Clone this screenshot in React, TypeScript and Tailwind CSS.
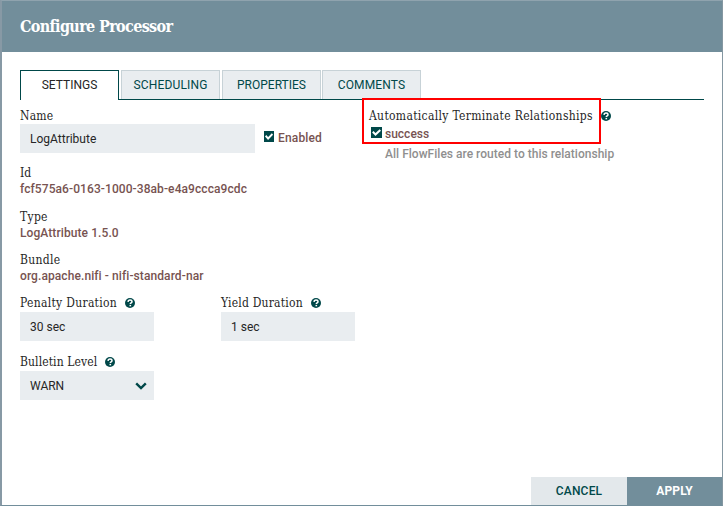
import React from 'react';

const slab = "font-['DejaVu_Serif_Condensed','DejaVu_Serif',serif] [font-stretch:condensed] text-[#262626] whitespace-nowrap";

function Help() {
  return (
    <svg className="block shrink-0" width="10" height="10" viewBox="0 0 10 10">
      <circle cx="5" cy="5" r="5" fill="#004849" />
      <path d="M3 3.900C3.100 2.600 3.900 2 5 2c1.200 0 2 .7 2 1.700 0 1.200-1.700 1.200-1.700 2.400" fill="none" stroke="#fff" strokeWidth="1.500" />
      <rect x="4.500" y="6.900" width="1.600" height="1.400" fill="#fff" />
    </svg>
  );
}

function Check({ className }: { className: string }) {
  return (
    <svg className={`block shrink-0 ${className}`} viewBox="0 0 11 11" preserveAspectRatio="none">
      <rect width="11" height="11" fill="#004849" />
      <path d="M1.800 4.800l2.700 2.700L9.300 3" fill="none" stroke="#fff" strokeWidth="2" />
    </svg>
  );
}

function Label({ text, track, help }: { text: string; track: string; help?: boolean }) {
  return (
    <div className="flex h-4 items-center gap-2 text-[12px] leading-4">
      <span className={`${slab} ${track}`}>{text}</span>
      {help && <Help />}
    </div>
  );
}

function Value({ text }: { text: string }) {
  return <div className="h-4 whitespace-nowrap text-[12px] font-medium leading-4 tracking-[0.085px] text-[#775351]">{text}</div>;
}

const tab = 'h-[29px] border border-b-0 border-[#c7d2d7] bg-[#e9edf0] text-center text-[12px] leading-[28px] text-[#004849] w-[99px]';
const input = 'mt-px h-[29px] w-[134px] bg-[#e9edf0] pl-[10px] text-[12px] leading-[31px] text-[#262626]';

export default function App() {
  return (
    <div className="relative h-[506px] w-[723px] overflow-hidden border-b border-l-2 border-r border-t border-b-[#728e9b] border-l-[#8799a5] border-r-[#8497a1] border-t-[#8fa3ae] bg-white font-['Roboto',sans-serif]">
      <div className="flex h-full flex-col">
        <header className="flex h-[51px] shrink-0 items-center bg-[#728e9b] pl-[18px]">
          <h1 className="whitespace-nowrap font-['DejaVu_Serif_Condensed','DejaVu_Serif',serif] text-[16px] font-bold leading-5 tracking-[-0.65px] text-white [font-stretch:condensed]">Configure Processor</h1>
        </header>

        <nav className="ml-[18px] mt-[18px] flex h-[30px] w-[684px] shrink-0">
          <div className="h-[30px] w-[99px] border border-b-0 border-[#004849] text-center text-[12px] leading-[28px] text-[#262626]">SETTINGS</div>
          <div className="flex flex-1 gap-[2px] border-b border-[#004849] pl-[2px]">
            <div className={`${tab} tracking-[0.15px]`}>SCHEDULING</div>
            <div className={tab}>PROPERTIES</div>
            <div className={`${tab} -ml-px tracking-[0.15px]`}>COMMENTS</div>
          </div>
        </nav>

        <main className="flex flex-1 pl-[18px]">
          <section className="w-[349px] shrink-0 pt-[8px]">
            <Label text="Name" track="tracking-[0.2px]" />
            <div className="flex">
              <div className="h-[29px] w-[235px] bg-[#e9edf0] pl-[10px] text-[12px] leading-[30px] text-[#262626]">LogAttribute</div>
              <Check className="ml-[9px] mt-[7px] h-[11px] w-[10px]" />
              <span className="ml-1 mt-[6px] text-[12px] font-medium leading-4 tracking-[0.15px] text-[#775351]">Enabled</span>
            </div>
            <div className="mt-3">
              <Label text="Id" track="" />
              <Value text="fcf575a6-0163-1000-38ab-e4a9ccca9cdc" />
            </div>
            <div className="mt-3">
              <Label text="Type" track="tracking-[0.3px]" />
              <Value text="LogAttribute 1.5.0" />
            </div>
            <div className="mt-[11px]">
              <Label text="Bundle" track="tracking-[0.3px]" />
              <Value text="org.apache.nifi - nifi-standard-nar" />
            </div>
            <div className="mt-[11px] flex gap-[67px]">
              <div>
                <Label text="Penalty Duration" track="tracking-[0.3px]" help />
                <div className={input}>30 sec</div>
              </div>
              <div>
                <Label text="Yield Duration" track="tracking-[0.2px]" help />
                <div className={input}>1 sec</div>
              </div>
            </div>
            <div className="mt-[13px]">
              <Label text="Bulletin Level" track="tracking-[0.1px]" help />
              <div className="mt-px flex h-[29px] w-[134px] items-center justify-between bg-[#e9edf0] pl-[10px] pr-[7px] text-[12px] text-[#262626]">
                <span>WARN</span>
                <svg className="block" width="12" height="8" viewBox="0 0 12 8"><path d="M1.200 1.300L6 6l4.800-4.700" fill="none" stroke="#004849" strokeWidth="2.400" /></svg>
              </div>
            </div>
          </section>

          <section className="pt-[8px]">
            <Label text="Automatically Terminate Relationships" track="tracking-[0.32px]" help />
            <div className="mt-[3px] flex h-4">
              <Check className="ml-[2px] h-[11px] w-[11px]" />
              <span className="ml-[3px] text-[12px] font-medium leading-[14px] text-[#775351]">success</span>
            </div>
            <div className="ml-4 mt-[3px] whitespace-nowrap text-[12px] font-medium leading-4 tracking-[0.02px] text-[#8f8f8f]">All FlowFiles are routed to this relationship</div>
          </section>
        </main>

        <footer className="flex h-[28px] shrink-0 justify-end text-center text-[12px] font-medium leading-[28px]">
          <button className="w-24 bg-[#e3e8eb] tracking-[0.2px] text-[#004849]">CANCEL</button>
          <button className="w-[95px] bg-[#728e9b] font-bold tracking-[0.1px] text-white">APPLY</button>
        </footer>
      </div>
      <div className="pointer-events-none absolute left-[360px] top-[97px] h-[46px] w-[239px] border-2 border-[#ff0000]" />
    </div>
  );
}
